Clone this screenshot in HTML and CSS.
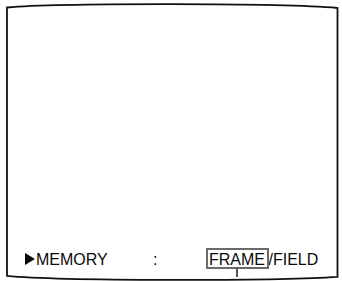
FILE: index.html
```html
<!DOCTYPE html>
<html lang="en">
<head>
    <meta charset="UTF-8">
    <title>Memory menu</title>
    <link rel="stylesheet" href="styles.css">
</head>
<body>
    <div class="screen">
        <svg class="screen-frame" viewBox="0 0 342 281" width="342" height="281">
            <path d="M7 7.5 C60 3 280 3 337.5 8 L337.5 276.8 C280 281 60 281 7 275.8 Z" fill="none" stroke="#111" stroke-width="1.8"/>
        </svg>
        <div class="menu-row">
            <span class="marker"></span>
            <span class="label">MEMORY</span>
            <span class="colon">:</span>
            <span class="options"><span class="selected">FRAME</span>/FIELD</span>
        </div>
    </div>
</body>
</html>
```

FILE: styles.css
```css
* {
    margin: 0;
    padding: 0;
    box-sizing: border-box;
}

body {
    background-color: white;
    font-family: "Liberation Sans", Arial, sans-serif;
    color: #0a0a0a;
}

.screen {
    position: relative;
    width: 342px;
    height: 281px;
    display: flex;
    flex-direction: column;
    justify-content: flex-end;
}

.screen-frame {
    position: absolute;
    top: 0;
    left: 0;
}

.menu-row {
    position: relative;
    display: flex;
    align-items: baseline;
    padding: 0 0 11px 25px;
    font-size: 16px;
    line-height: 20px;
}

.marker {
    width: 0;
    height: 0;
    border-left: 10.5px solid #0a0a0a;
    border-top: 6px solid transparent;
    border-bottom: 6px solid transparent;
    margin-right: 1px;
}

.label {
    width: 117px;
}

.colon {
    width: 4.5px;
}

.options {
    margin-left: 48px;
}

.selected {
    position: relative;
    display: inline-block;
    line-height: 15px;
    padding: 2px 1.5px 0 1.5px;
    border: 2px solid #6a6a6a;
}

.selected::after {
    content: "";
    position: absolute;
    top: 100%;
    left: 50%;
    width: 1.5px;
    height: 10px;
    margin-left: -0.75px;
    background-color: #555;
}
```
